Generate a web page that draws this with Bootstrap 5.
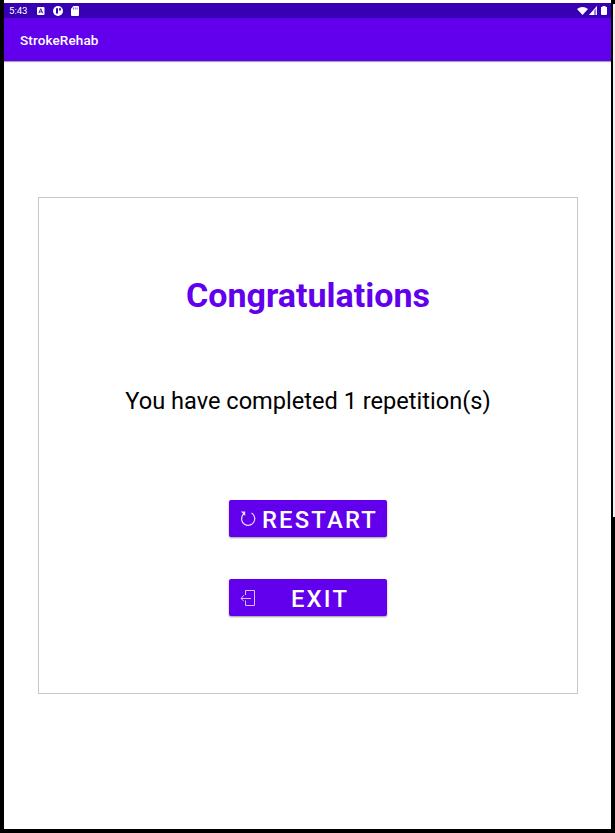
<!DOCTYPE html>
<html lang="en">
<head>
<meta charset="utf-8">
<meta name="viewport" content="width=device-width, initial-scale=1">
<title>StrokeRehab</title>
<link rel="stylesheet" href="https://cdn.jsdelivr.net/npm/bootstrap@5.3.0/dist/css/bootstrap.min.css">
<style>
body { font-family: Roboto, sans-serif; background: #000; }
.frame { height: 833px; width: 615px; padding: 0 0 4px 4px; }
.device { width: 607px; padding-top: 3px; }
.edge { width: 4px; height: 517px; border-left: 2px solid #000; border-top: 4px solid #000; background: #f2f2f2; }
.status { height: 15px; background: #3700b3; font-size: 9.6px; line-height: 15px; padding: 0 4px 0 5px; }
.status svg { display: block; }
.clock { width: 20px; }
.signal { margin-left: 1px; }
.appbar { height: 43px; background: #6200ee; padding: 0 0 0 16px; box-shadow: 0 1px 1px rgba(0,0,0,.35); }
.appbar .navbar-brand { font-size: 13.5px; font-weight: 500; line-height: 20px; padding: 0; letter-spacing: .12px; }
.panel { width: 540px; height: 497px; margin: 136px 0 0 34px; border: 1px solid #c8c8c8; }
.headline { font-size: 34px; font-weight: 700; line-height: 40px; color: #6200ee; margin-top: 77px; }
.message { font-size: 23.6px; line-height: 30px; margin-top: 71px; color: #000; }
.actions { margin-top: 84px; gap: 42px; }
.btn-action { width: 158px; height: 37px; padding: 0 8px 0 11px; background: #6200ee; border: 0; border-radius: 2px; font-size: 23.8px; font-weight: 500; line-height: 37px; letter-spacing: 2.2px; color: #fff; box-shadow: 0 1px 2px rgba(0,0,0,.4); }
.btn-action:hover { background: #6200ee; color: #fff; }
.btn-action svg { flex: none; }
.btn-action span { padding: 3px 0 0 5px; white-space: nowrap; }
</style>
<script src="https://cdn.jsdelivr.net/npm/bootstrap@5.3.0/dist/js/bootstrap.bundle.min.js"></script>
</head>
<body>
<div class="frame d-flex">
  <main class="device bg-white d-flex flex-column">
    <div class="status d-flex align-items-center text-white">
      <span class="clock">5:43</span>
      <svg class="ms-2" width="8" height="8" viewBox="0 0 8 8"><rect width="7.5" height="8" rx="1" fill="#fff"/><path d="M1.800 6.300L3.750 1.700 5.700 6.300M2.500 4.900h2.500" fill="none" stroke="#3700b3" stroke-width=".9"/></svg>
      <svg class="ms-2" width="10" height="10" viewBox="0 0 10 10"><circle cx="5" cy="5" r="5" fill="#fff"/><path d="M3 2.300h2v5.200H3zM6 2.300h1.900v2.200H6z" fill="#3700b3"/></svg>
      <svg class="ms-2" width="8" height="10" viewBox="0 0 8 10"><path d="M2.500 0H7q1 0 1 1v8q0 1-1 1H1Q0 10 0 9V2.700z" fill="#fff"/><path d="M2.500 1.500v2M4.300 1.500v2M6.100 1.500v2" stroke="#3700b3" stroke-width=".6"/></svg>
      <svg class="ms-auto" width="11" height="8" viewBox="0 0 11 8"><path d="M0 2Q5.500-2 11 2L5.500 8z" fill="#fff"/></svg>
      <svg class="signal" width="8" height="9" viewBox="0 0 8 9"><path d="M0 9L8 0v9z" fill="#fff" opacity=".5"/><path d="M0 9L5 3.400V9zM0 9L8 0v1.200L1 9zM7.200 1H8v8h-.8z" fill="#fff"/></svg>
      <svg class="ms-1" width="6" height="9" viewBox="0 0 6 9"><path d="M1.500 0h3v1H6v7q0 1-1 1H1Q0 9 0 8V1h1.500z" fill="#fff"/></svg>
    </div>
    <nav class="appbar navbar navbar-dark"><span class="navbar-brand m-0">StrokeRehab</span></nav>
    <section class="panel d-flex flex-column align-items-center text-center">
      <h1 class="headline mb-0">Congratulations</h1>
      <p class="message mb-0">You have completed 1 repetition(s)</p>
      <div class="actions d-flex flex-column">
        <button type="button" class="btn btn-action d-flex align-items-center">
          <svg width="16" height="16" viewBox="0 0 16 16" fill="none" stroke="#fff" stroke-opacity=".85" stroke-width="1.200"><path d="M11.500 2A6.600 6.600 0 1 1 2.800 3.800L4.200 2.500"/><path d="M.8.600H5.200v4.400L3.600 3.200z" fill="#fff" fill-opacity=".85" stroke="none"/></svg>
          <span class="flex-fill">RESTART</span>
        </button>
        <button type="button" class="btn btn-action d-flex align-items-center">
          <svg width="16" height="16" viewBox="0 0 16 16" fill="none" stroke="#fff" stroke-opacity=".75"><path d="M5.500 5V.5h9v15h-9V10.500M11 8.500H1.500M3.800 5.200L1 8.500l2.800 2.500"/></svg>
          <span class="flex-fill">EXIT</span>
        </button>
      </div>
    </section>
  </main>
  <div class="edge"></div>
</div>
</body>
</html>
